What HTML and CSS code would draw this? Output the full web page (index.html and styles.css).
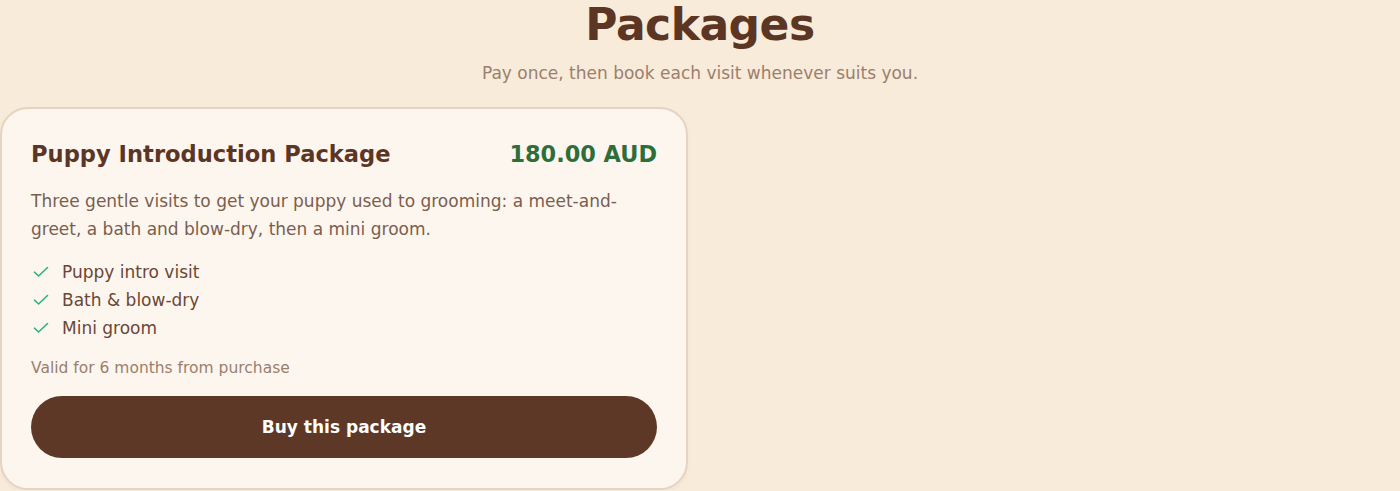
FILE: index.html
```html
<!DOCTYPE html>
<html lang="en">
<head>
<meta charset="utf-8">
<title>Packages</title>
<link rel="stylesheet" href="styles.css">
</head>
<body>
<main class="page">
  <header class="intro">
    <h1 class="title">Packages</h1>
    <p class="subtitle">Pay once, then book each visit whenever suits you.</p>
  </header>
  <section class="grid">
    <article class="card">
      <div class="card-head">
        <h2 class="card-title">Puppy Introduction Package</h2>
        <span class="price">180.00 AUD</span>
      </div>
      <p class="desc">Three gentle visits to get your puppy used to grooming: a meet-and-greet, a bath and blow-dry, then a mini groom.</p>
      <ul class="features">
        <li><svg class="check" viewBox="0 0 16 12" width="16" height="12" aria-hidden="true"><path d="M1.5 6.2 L5.6 10 L14.5 1.5" fill="none" stroke="currentColor" stroke-width="1.6" stroke-linecap="round" stroke-linejoin="round"/></svg>Puppy intro visit</li>
        <li><svg class="check" viewBox="0 0 16 12" width="16" height="12" aria-hidden="true"><path d="M1.5 6.2 L5.6 10 L14.5 1.5" fill="none" stroke="currentColor" stroke-width="1.6" stroke-linecap="round" stroke-linejoin="round"/></svg>Bath &amp; blow-dry</li>
        <li><svg class="check" viewBox="0 0 16 12" width="16" height="12" aria-hidden="true"><path d="M1.5 6.2 L5.6 10 L14.5 1.5" fill="none" stroke="currentColor" stroke-width="1.6" stroke-linecap="round" stroke-linejoin="round"/></svg>Mini groom</li>
      </ul>
      <p class="valid">Valid for 6 months from purchase</p>
      <button class="buy" type="button">Buy this package</button>
    </article>
  </section>
</main>
</body>
</html>
```
FILE: styles.css
```css
* { box-sizing: border-box; }
html, body { margin: 0; padding: 0; }
body {
  background: #f8ebda;
  font-family: "DejaVu Sans", Verdana, sans-serif;
  color: #5c3625;
}
.page { width: 1400px; }
.intro { text-align: center; padding-top: 3px; }
.title {
  margin: 0;
  font-size: 44px;
  line-height: 44px;
  font-weight: 700;
  letter-spacing: -0.5px;
  color: #5c3625;
}
.subtitle {
  margin: 14px 0 22px;
  font-size: 17px;
  line-height: 24px;
  color: #9a7f6d;
}
.grid {
  display: grid;
  grid-template-columns: 1fr 1fr;
  gap: 24px;
}
.card {
  background: #fdf6ef;
  border: 2px solid #e6d4c1;
  border-radius: 28px;
  padding: 28px 29px 30px 29px;
  box-shadow: 0 2px 4px rgba(120, 80, 50, 0.06);
}
.card-head {
  display: flex;
  justify-content: space-between;
  align-items: baseline;
  gap: 16px;
}
.card-title {
  margin: 0;
  font-size: 22.6px;
  line-height: 34px;
  font-weight: 700;
  color: #5c3625;
}
.price {
  font-size: 22.4px;
  line-height: 34px;
  font-weight: 700;
  color: #2e6e3b;
}
.desc {
  margin: 16px 0 15px;
  font-size: 17px;
  line-height: 28px;
  color: #7a5e4e;
}
.features {
  list-style: none;
  margin: 0;
  padding: 0;
}
.features li {
  display: flex;
  align-items: center;
  font-size: 17px;
  line-height: 28px;
  color: #6a4636;
}
.check {
  flex: none;
  margin: 0 13px 0 2px;
  color: #2db574;
}
.valid {
  margin: 15px 0 17px;
  font-size: 15.5px;
  line-height: 22px;
  color: #9a7f6d;
}
.buy {
  display: block;
  width: 100%;
  height: 62px;
  border: 0;
  border-radius: 31px;
  background: #5e3826;
  color: #ffffff;
  font-family: "DejaVu Sans", Verdana, sans-serif;
  font-size: 17px;
  font-weight: 700;
  cursor: pointer;
}
```
